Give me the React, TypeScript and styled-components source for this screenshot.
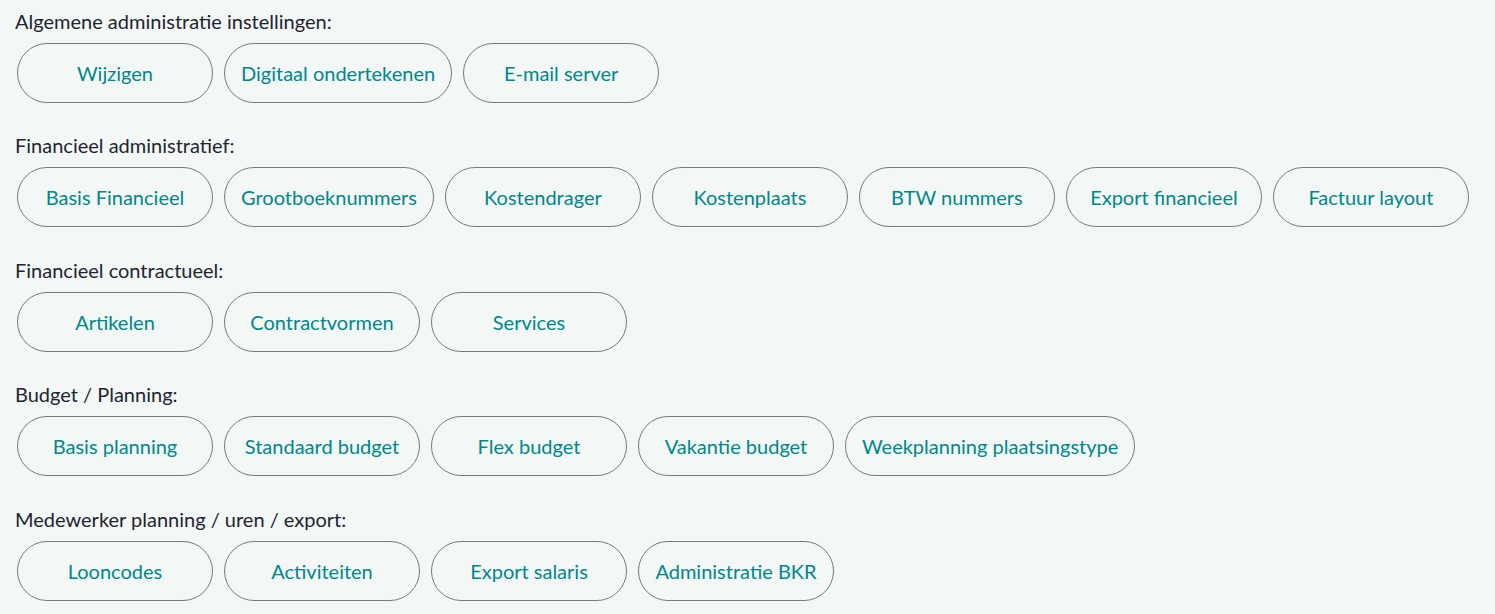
import React from "react";
import styled, { createGlobalStyle } from "styled-components";

const GlobalStyle = createGlobalStyle`
  html, body {
    margin: 0;
    padding: 0;
    background: #f3f8f6;
  }
  body {
    font-family: Lato, "Open Sans", sans-serif;
  }
`;

const Page = styled.div`
  padding: 9px 0 0 15px;
  display: flex;
  flex-direction: column;
  gap: 30px;
`;

const Section = styled.section`
  display: flex;
  flex-direction: column;
  gap: 10px;

  &:nth-child(odd):not(:first-child) {
    margin-top: 1px;
  }
`;

const Label = styled.div`
  font-size: 20px;
  line-height: 24px;
  color: #1e2430;
`;

const ButtonRow = styled.div`
  display: flex;
  flex-wrap: wrap;
  gap: 11px;
  padding-left: 2px;
`;

const PillButton = styled.button`
  box-sizing: border-box;
  min-width: 196px;
  height: 60px;
  padding: 0 16px;
  border: 1px solid #7a7a7a;
  border-radius: 30px;
  background: transparent;
  color: #00878a;
  font-family: Lato, "Open Sans", sans-serif;
  font-size: 20px;
  cursor: pointer;
`;

const sections: { title: string; items: string[] }[] = [
  {
    title: "Algemene administratie instellingen:",
    items: ["Wijzigen", "Digitaal ondertekenen", "E-mail server"],
  },
  {
    title: "Financieel administratief:",
    items: [
      "Basis Financieel",
      "Grootboeknummers",
      "Kostendrager",
      "Kostenplaats",
      "BTW nummers",
      "Export financieel",
      "Factuur layout",
    ],
  },
  {
    title: "Financieel contractueel:",
    items: ["Artikelen", "Contractvormen", "Services"],
  },
  {
    title: "Budget / Planning:",
    items: [
      "Basis planning",
      "Standaard budget",
      "Flex budget",
      "Vakantie budget",
      "Weekplanning plaatsingstype",
    ],
  },
  {
    title: "Medewerker planning / uren / export:",
    items: ["Looncodes", "Activiteiten", "Export salaris", "Administratie BKR"],
  },
];

export default function App() {
  return (
    <>
      <GlobalStyle />
      <Page>
        {sections.map((s) => (
          <Section key={s.title}>
            <Label>{s.title}</Label>
            <ButtonRow>
              {s.items.map((it) => (
                <PillButton key={it}>{it}</PillButton>
              ))}
            </ButtonRow>
          </Section>
        ))}
      </Page>
    </>
  );
}
